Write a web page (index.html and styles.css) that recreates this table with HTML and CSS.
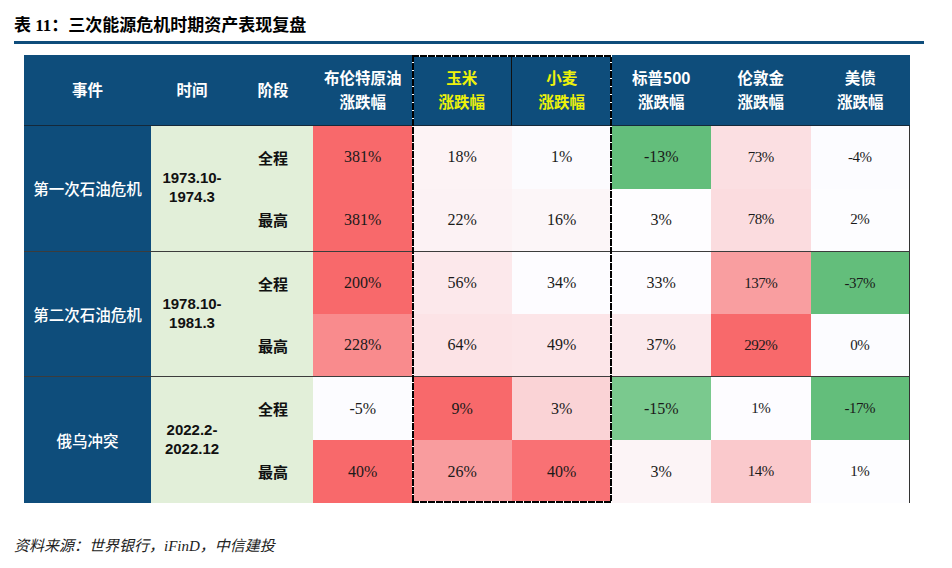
FILE: index.html
```html
<!DOCTYPE html>
<html lang="zh-CN">
<head>
<meta charset="utf-8">
<link rel="stylesheet" href="styles.css">
</head>
<body>
<div class="page">
  <h1 class="title"><span class="lat">表 11</span>：三次能源危机时期资产表现复盘</h1>
  <div class="rule"></div>
  <div class="table-wrap">
    <div class="grid">
      <div class="hd">事件</div>
      <div class="hd">时间</div>
      <div class="hd">阶段</div>
      <div class="hd">布伦特原油<br>涨跌幅</div>
      <div class="hd yel sep">玉米<br>涨跌幅</div>
      <div class="hd yel">小麦<br>涨跌幅</div>
      <div class="hd">标普500<br>涨跌幅</div>
      <div class="hd">伦敦金<br>涨跌幅</div>
      <div class="hd">美债<br>涨跌幅</div>

      <div class="ev last">第一次石油危机</div>
      <div class="dt last">1973.10-<br>1974.3</div>
      <div class="ph">全程</div>
      <div class="v" style="background:#f8696b">381%</div>
      <div class="v" style="background:#fdf3f5">18%</div>
      <div class="v" style="background:#fcfbfe">1%</div>
      <div class="v" style="background:#63be7b">-13%</div>
      <div class="v alt" style="background:#fbdfe2">73%</div>
      <div class="v alt r" style="background:#fcfcff">-4%</div>
      <div class="ph last">最高</div>
      <div class="v last" style="background:#f8696b">381%</div>
      <div class="v last" style="background:#fcf2f4">22%</div>
      <div class="v last" style="background:#fcf6f8">16%</div>
      <div class="v last" style="background:#fefdff">3%</div>
      <div class="v alt last" style="background:#fbdcdf">78%</div>
      <div class="v alt last r" style="background:#fdfdff">2%</div>

      <div class="ev last">第二次石油危机</div>
      <div class="dt last">1978.10-<br>1981.3</div>
      <div class="ph">全程</div>
      <div class="v" style="background:#f8696b">200%</div>
      <div class="v" style="background:#fce8eb">56%</div>
      <div class="v" style="background:#fdfcff">34%</div>
      <div class="v" style="background:#fdfcff">33%</div>
      <div class="v alt" style="background:#f99ea0">137%</div>
      <div class="v alt r" style="background:#63be7b">-37%</div>
      <div class="ph last">最高</div>
      <div class="v last" style="background:#f98b8d">228%</div>
      <div class="v last" style="background:#fce3e6">64%</div>
      <div class="v last" style="background:#fce5e8">49%</div>
      <div class="v last" style="background:#fbe9ec">37%</div>
      <div class="v alt last" style="background:#f8696b">292%</div>
      <div class="v alt last r" style="background:#fcfcff">0%</div>

      <div class="ev">俄乌冲突</div>
      <div class="dt">2022.2-<br>2022.12</div>
      <div class="ph">全程</div>
      <div class="v" style="background:#fcfcff">-5%</div>
      <div class="v" style="background:#f8696b">9%</div>
      <div class="v" style="background:#fad3d6">3%</div>
      <div class="v" style="background:#7ac98e">-15%</div>
      <div class="v alt" style="background:#fdfcff">1%</div>
      <div class="v alt r" style="background:#63be7b">-17%</div>
      <div class="ph">最高</div>
      <div class="v" style="background:#f8696b">40%</div>
      <div class="v" style="background:#f99c9e">26%</div>
      <div class="v" style="background:#f97174">40%</div>
      <div class="v" style="background:#fcf4f6">3%</div>
      <div class="v alt" style="background:#fac9cc">14%</div>
      <div class="v alt r" style="background:#fdfdff">1%</div>
    </div>
    <div class="selection"></div>
  </div>
  <p class="source">资料来源：世界银行，<span class="lat">iFinD</span>，中信建投</p>
</div>
</body>
</html>
```

FILE: styles.css
```css
html, body {
  margin: 0;
  padding: 0;
  background: #ffffff;
}

.page {
  width: 952px;
  height: 568px;
  display: flex;
  flex-direction: column;
  font-family: "Noto Sans CJK SC", sans-serif;
  color: #111;
}

.title {
  margin: 14px 0 0 14px;
  font-size: 17px;
  line-height: 20px;
  font-weight: 700;
  color: #000;
  font-family: "Noto Sans CJK SC", sans-serif;
}

.title .lat {
  font-family: "Liberation Serif", "Noto Sans CJK SC", serif;
}

.rule {
  margin: 5px 0 0 14px;
  width: 910px;
  height: 3px;
  background: #0e4d7b;
}

.table-wrap {
  position: relative;
  margin: 11px 0 0 24px;
  width: 886px;
}

.grid {
  display: grid;
  grid-template-columns: 127px 82px 80px 99.5px 99.5px 99.5px 99.5px 99.5px 99.5px;
  grid-template-rows: 71px repeat(6, 62.83px);
  border-bottom: 1px solid #333;
  box-sizing: border-box;
  height: 448px;
}

.grid > div {
  display: flex;
  align-items: center;
  justify-content: center;
  text-align: center;
  box-sizing: border-box;
}

.hd {
  background: #0e4d7b;
  color: #ffffff;
  font-weight: 700;
  font-size: 15.5px;
  line-height: 24px;
  border-bottom: 1px solid #15293a;
  padding-bottom: 3px;
}

.hd.yel {
  color: #eef20a;
}

.hd.sep {
  border-right: 1px solid #111;
}

.ev {
  grid-row: span 2;
  background: #0e4d7b;
  color: #ffffff;
  font-size: 15.5px;
  font-weight: 500;
}

.dt {
  grid-row: span 2;
  background: #e2efd9;
  font-family: "Liberation Sans", Arial, sans-serif;
  font-weight: 700;
  font-size: 15px;
  line-height: 19px;
  color: #111;
  padding-bottom: 2px;
}

.ph {
  background: #e2efd9;
  font-weight: 700;
  font-size: 15px;
  color: #111;
}

.v {
  font-family: "Liberation Serif", "Times New Roman", serif;
  font-size: 16px;
  color: #1a1a1a;
}

.v.alt {
  font-size: 15px;
  letter-spacing: -0.5px;
}

.v.r {
  border-right: 1px solid #333;
}

.last {
  border-bottom: 1px solid #3c3c3c;
}

.selection {
  position: absolute;
  top: 0;
  bottom: 0;
  left: 388px;
  width: 200px;
  pointer-events: none;
  background:
    repeating-linear-gradient(90deg, #000 0 7px, #fff 7px 8px) left top / 100% 2px no-repeat,
    repeating-linear-gradient(90deg, #000 0 7px, #fff 7px 8px) left bottom / 100% 2px no-repeat,
    repeating-linear-gradient(180deg, #000 0 7px, #fff 7px 8px) left top / 2px 100% no-repeat,
    repeating-linear-gradient(180deg, #000 0 7px, #fff 7px 8px) right top / 2px 100% no-repeat;
}

.source {
  margin: 32px 0 0 14px;
  font-size: 15px;
  line-height: 20px;
  font-style: italic;
  color: #222;
  font-family: "Noto Sans CJK SC", sans-serif;
}

.source .lat {
  font-family: "Liberation Serif", serif;
}
```
